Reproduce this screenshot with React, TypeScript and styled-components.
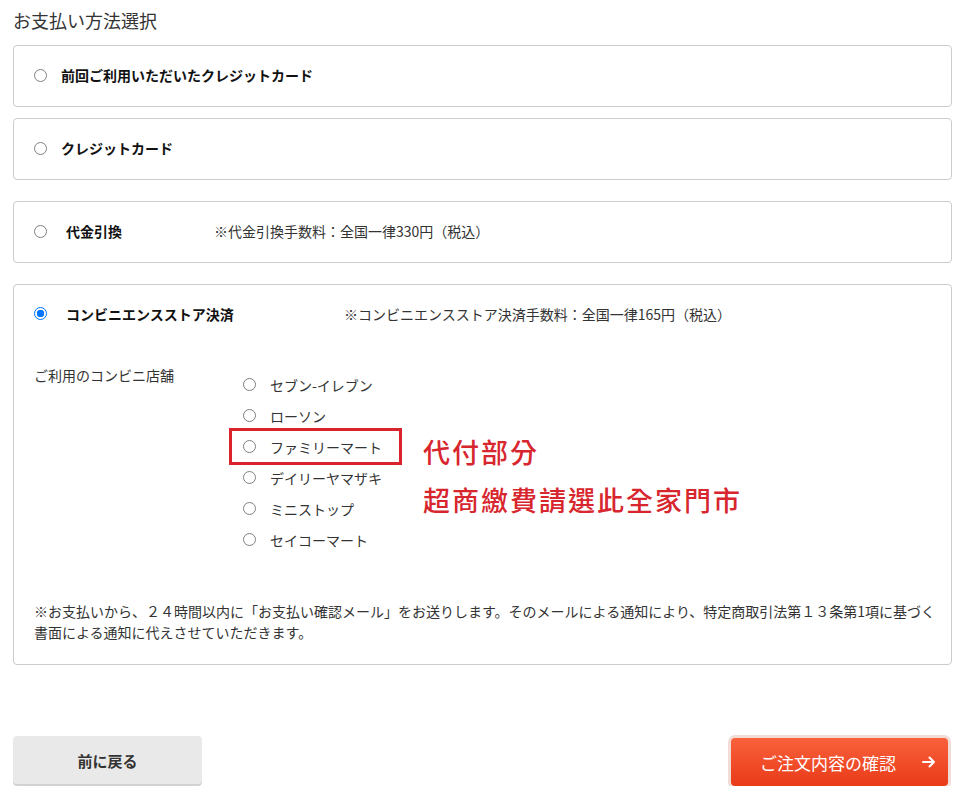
import React, {FC, useState} from 'react';
import styled, {createGlobalStyle} from "styled-components";

const GlobalStyle = createGlobalStyle`
  body {
    margin: 0;
    background: #FFFFFF;
    font-family: "Noto Sans CJK JP", "Noto Sans", sans-serif;
    color: #222222;
  }
`
const Page = styled.div`
  width: 939px;
  padding: 8px 0 0 13px;
`
const Title = styled.h2`
  margin: 0 0 13px;
  height: 24px;
  font-size: 18px;
  line-height: 24px;
  font-weight: 400;
  color: #333333;
`
const Card = styled.div<{gap: number}>`
  box-sizing: border-box;
  min-height: 62px;
  margin-bottom: ${props => props.gap}px;
  padding: 0 20px 2px;
  border: 1px solid #CCCCCC;
  border-radius: 4px;
  display: flex;
  flex-direction: column;
  justify-content: center;
`
const OpenCard = styled(Card)`
  justify-content: flex-start;
  padding: 18px 10px 21px 20px;
`
const Head = styled.label`
  display: flex;
  align-items: center;
  height: 21px;
  font-size: 14px;
  cursor: pointer;
`
const Radio = styled.span<{checked?: boolean}>`
  box-sizing: border-box;
  flex: none;
  width: 13px;
  height: 13px;
  border-radius: 50%;
  border: ${props => props.checked ? '1px solid #0075FF' : '1px solid #808080'};
  background: ${props => props.checked ? 'radial-gradient(circle, #0075FF 0 3.5px, #FFFFFF 4px)' : '#FFFFFF'};
`
const Name = styled.span<{indent: number, width?: number}>`
  margin-left: ${props => props.indent}px;
  width: ${props => props.width ? props.width + 'px' : 'auto'};
  font-weight: 700;
  color: #111111;
`
const Note = styled.span`
  color: #333333;
`
const Stores = styled.div`
  display: flex;
  margin-top: 41px;
`
const StoreLabel = styled.div`
  width: 198px;
  font-size: 14px;
  line-height: 21px;
  color: #333333;
`
const StoreList = styled.div`
  padding-top: 4px;
`
const Store = styled.label<{marked?: boolean}>`
  box-sizing: border-box;
  display: flex;
  align-items: center;
  width: 167px;
  height: 31px;
  padding-left: 11px;
  font-size: 14px;
  color: #333333;
  cursor: pointer;
  box-shadow: ${props => props.marked ? '0 0 0 3px #D9232D' : 'none'};
`
const StoreName = styled.span`
  margin-left: 14px;
`
const Memo = styled.div`
  margin: 63px 0 0 24px;
  font-family: "Noto Sans CJK TC", "Noto Sans CJK JP", sans-serif;
  font-size: 27px;
  line-height: 48px;
  letter-spacing: 2px;
  font-weight: 500;
  color: #D7262E;
`
const Footnote = styled.p`
  margin: 46px 0 0;
  font-size: 14px;
  line-height: 21px;
  color: #333333;
`
const Buttons = styled.div`
  display: flex;
  justify-content: space-between;
  align-items: flex-start;
  margin-top: 71px;
  padding-right: 4px;
`
const BackButton = styled.button`
  width: 189px;
  height: 48px;
  border: none;
  border-radius: 4px;
  background: #E9E9E9;
  box-shadow: 0 2px 0 #D2D2D2;
  font-family: inherit;
  font-size: 15px;
  font-weight: 700;
  color: #333333;
  cursor: pointer;
`
const NextButton = styled.button`
  display: flex;
  align-items: center;
  justify-content: space-between;
  width: 217px;
  height: 48px;
  margin-top: 2px;
  padding: 0 12px 0 29px;
  border: none;
  border-radius: 4px;
  background: linear-gradient(#F9613C, #E93A18);
  box-shadow: 0 0 0 3px #F2DCD6;
  font-family: inherit;
  font-size: 17px;
  color: #FFFFFF;
  cursor: pointer;
`

const methods = [
    {id: 'last', name: '前回ご利用いただいたクレジットカード', indent: 14, gap: 11},
    {id: 'card', name: 'クレジットカード', indent: 14, gap: 21},
    {id: 'cod', name: '代金引換', indent: 19, gap: 21, width: 148, note: '※代金引換手数料：全国一律330円（税込）'},
]
const stores = ['セブン-イレブン', 'ローソン', 'ファミリーマート', 'デイリーヤマザキ', 'ミニストップ', 'セイコーマート']

const App: FC = () => {
    const [method, setMethod] = useState<string>('cvs')
    const [store, setStore] = useState<string>('')

    return (
        <Page>
            <GlobalStyle/>
            <Title>お支払い方法選択</Title>
            {methods.map(m => (
                <Card key={m.id} gap={m.gap}>
                    <Head onClick={() => setMethod(m.id)}>
                        <Radio checked={method === m.id}/>
                        <Name indent={m.indent} width={m.width}>{m.name}</Name>
                        {m.note && <Note>{m.note}</Note>}
                    </Head>
                </Card>
            ))}
            <OpenCard gap={0}>
                <Head onClick={() => setMethod('cvs')}>
                    <Radio checked={method === 'cvs'}/>
                    <Name indent={19} width={278}>コンビニエンスストア決済</Name>
                    <Note>※コンビニエンスストア決済手数料：全国一律165円（税込）</Note>
                </Head>
                <Stores>
                    <StoreLabel>ご利用のコンビニ店舗</StoreLabel>
                    <StoreList>
                        {stores.map(s => (
                            <Store key={s} marked={s === 'ファミリーマート'} onClick={() => setStore(s)}>
                                <Radio checked={store === s}/>
                                <StoreName>{s}</StoreName>
                            </Store>
                        ))}
                    </StoreList>
                    <Memo>
                        <div>代付部分</div>
                        <div>超商繳費請選此全家門市</div>
                    </Memo>
                </Stores>
                <Footnote>
                    ※お支払いから、２４時間以内に「お支払い確認メール」をお送りします。そのメールによる通知により、特定商取引法第１３条第1項に基づく書面による通知に代えさせていただきます。
                </Footnote>
            </OpenCard>
            <Buttons>
                <BackButton>前に戻る</BackButton>
                <NextButton>
                    <span>ご注文内容の確認</span>
                    <svg width="14" height="14" viewBox="0 0 14 14" fill="none">
                        <path d="M1 7H12M7.5 2.5L12 7L7.5 11.5" stroke="#FFFFFF" strokeWidth="2" strokeLinecap="round" strokeLinejoin="round"/>
                    </svg>
                </NextButton>
            </Buttons>
        </Page>
    );
};

export default App;
